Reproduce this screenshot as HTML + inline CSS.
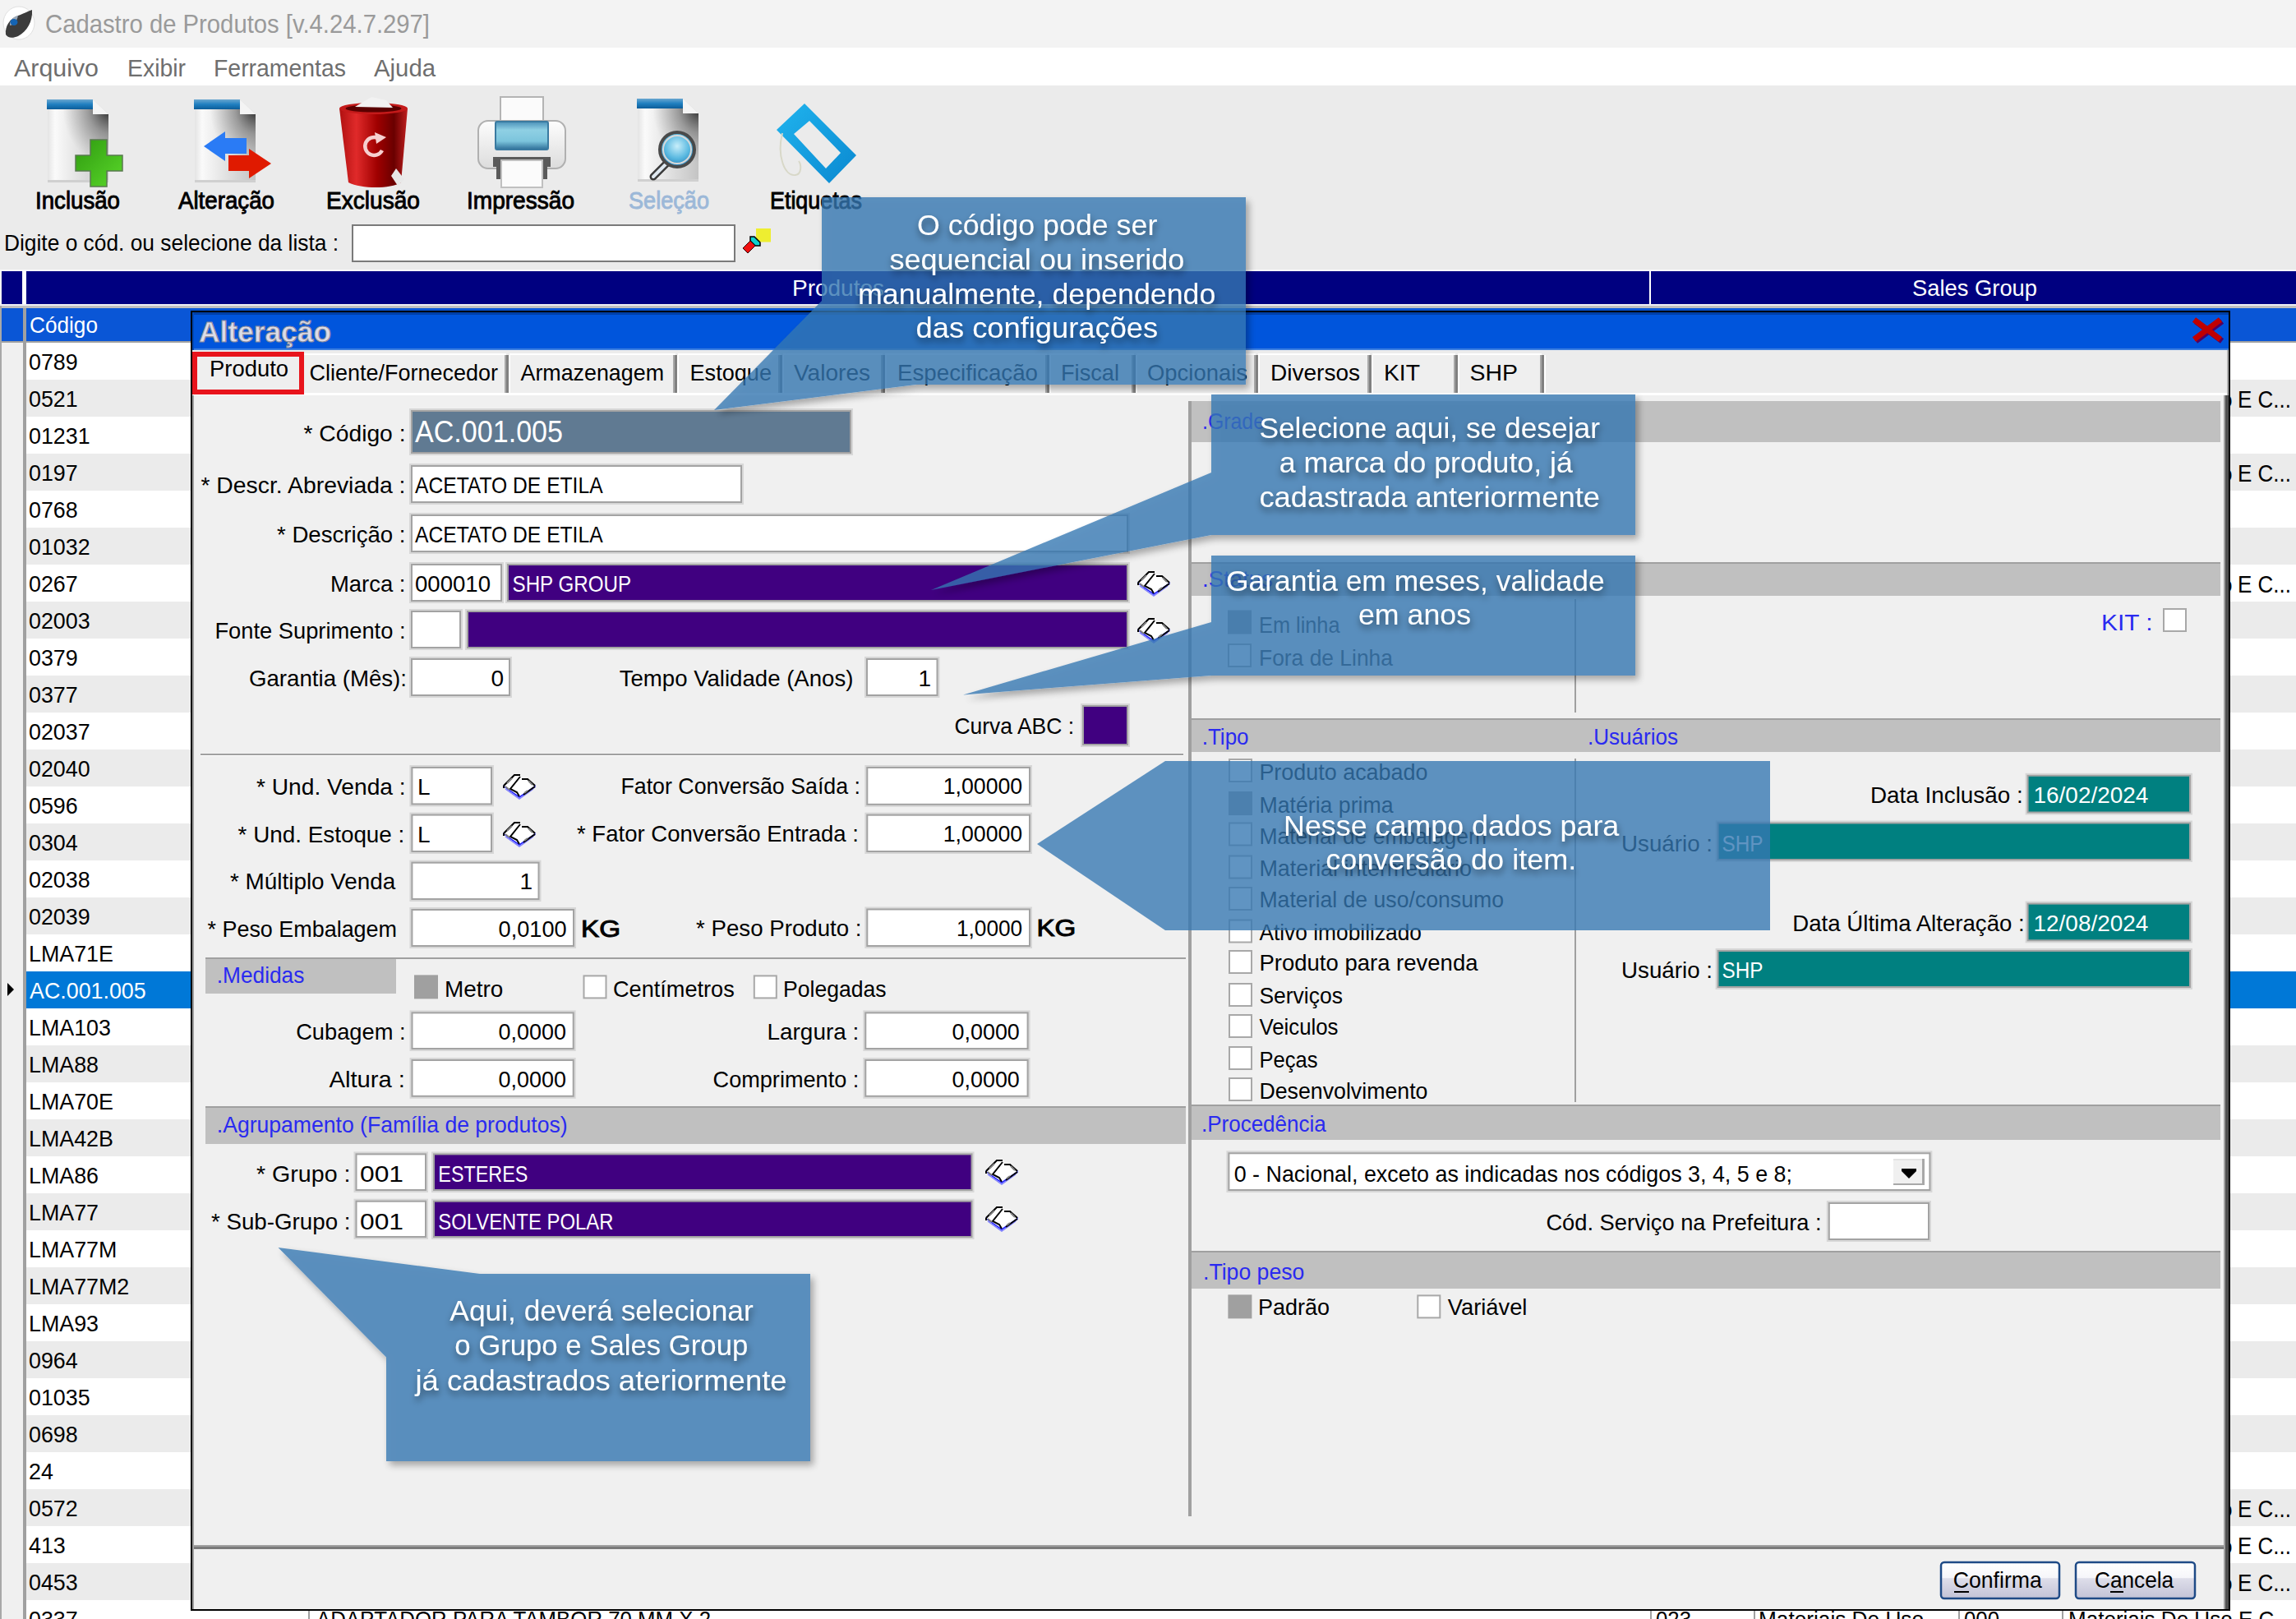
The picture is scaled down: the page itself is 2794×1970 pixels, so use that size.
<!DOCTYPE html>
<html><head><meta charset="utf-8"><title>Cadastro de Produtos</title>
<style>html,body{margin:0;padding:0;background:#f0f0f0;overflow:hidden}svg{display:block}</style></head>
<body><svg width="2794" height="1970" viewBox="0 0 2794 1970">
<defs>
<filter id="sh" x="-10%" y="-10%" width="130%" height="130%"><feFlood flood-color="#000" flood-opacity="1" result="f"/><feComposite in="f" in2="SourceAlpha" operator="in" result="sa"/><feGaussianBlur in="sa" stdDeviation="4"/><feOffset dx="4" dy="5" result="b"/><feComponentTransfer in="b" result="b2"><feFuncA type="linear" slope="0.4"/></feComponentTransfer><feComposite in="b2" in2="sa" operator="out" result="so"/><feMerge><feMergeNode in="so"/><feMergeNode in="SourceGraphic"/></feMerge></filter>
<filter id="tsh" x="-10%" y="-30%" width="130%" height="170%"><feGaussianBlur in="SourceAlpha" stdDeviation="4"/><feOffset dx="1" dy="5"/><feComponentTransfer><feFuncA type="linear" slope="0.5"/></feComponentTransfer><feMerge><feMergeNode/><feMergeNode in="SourceGraphic"/></feMerge></filter>

<linearGradient id="docg" x1="0" y1="0" x2="1" y2="0"><stop offset="0" stop-color="#e4e4e4"/><stop offset="0.12" stop-color="#fafafa"/><stop offset="0.6" stop-color="#dcdcdc"/><stop offset="1" stop-color="#c4c4c4"/></linearGradient>
<radialGradient id="docsh" cx="1" cy="0" r="0.75"><stop offset="0" stop-color="#202020" stop-opacity="0.95"/><stop offset="0.45" stop-color="#606060" stop-opacity="0.5"/><stop offset="1" stop-color="#808080" stop-opacity="0"/></radialGradient>
<linearGradient id="barg" x1="0" y1="0" x2="0" y2="1"><stop offset="0" stop-color="#6aa7d0"/><stop offset="0.5" stop-color="#1f7fc0"/><stop offset="1" stop-color="#0d5d99"/></linearGradient>
<linearGradient id="greeng" x1="0" y1="0" x2="1" y2="1"><stop offset="0" stop-color="#2f9a10"/><stop offset="1" stop-color="#5ad82a"/></linearGradient>
<linearGradient id="trashg" x1="0" y1="0" x2="1" y2="0"><stop offset="0" stop-color="#b01010"/><stop offset="0.25" stop-color="#e02a2a"/><stop offset="0.55" stop-color="#a00000"/><stop offset="0.8" stop-color="#6a0000"/><stop offset="1" stop-color="#c02020"/></linearGradient>
<linearGradient id="tagg" x1="0" y1="0" x2="1" y2="1"><stop offset="0" stop-color="#20b4ee"/><stop offset="1" stop-color="#0a88d0"/></linearGradient>
<radialGradient id="lensg" cx="0.5" cy="0.4" r="0.6"><stop offset="0" stop-color="#c8eefa"/><stop offset="0.6" stop-color="#58b8e0"/><stop offset="1" stop-color="#2a80b8"/></radialGradient>
<linearGradient id="printg" x1="0" y1="0" x2="0" y2="1"><stop offset="0" stop-color="#4a90b8"/><stop offset="0.3" stop-color="#8fd0e4"/><stop offset="0.7" stop-color="#7cc4dc"/><stop offset="1" stop-color="#2e6e98"/></linearGradient>
<linearGradient id="btng" x1="0" y1="0" x2="0" y2="1"><stop offset="0" stop-color="#ffffff"/><stop offset="0.42" stop-color="#f6f6fa"/><stop offset="0.45" stop-color="#dedeea"/><stop offset="1" stop-color="#c2c2d6"/></linearGradient>
<linearGradient id="pbody" x1="0" y1="0" x2="0" y2="1"><stop offset="0" stop-color="#fdfdfd"/><stop offset="1" stop-color="#dcdcdc"/></linearGradient>

</defs>
<rect x="0" y="0" width="2794" height="1970" fill="#f0f0f0" />
<rect x="0" y="0" width="2794" height="58" fill="#f3f3f3" />
<rect x="0" y="58" width="2794" height="46" fill="#ffffff" />
<rect x="0" y="104" width="2794" height="226" fill="#ebebeb" />
<rect x="0" y="330" width="2794" height="41" fill="#000080" />
<rect x="0" y="330" width="2" height="41" fill="#f4f4f4" />
<rect x="27" y="330" width="5" height="41" fill="#ffffff" />
<rect x="2007" y="330" width="2" height="41" fill="#ffffff" />
<rect x="0" y="370" width="2794" height="2" fill="#eeeef4" />
<rect x="0" y="372" width="2794" height="3" fill="#c0c0c0" />
<rect x="0" y="375" width="2794" height="40" fill="#0a56d6" />
<rect x="0" y="415" width="2794" height="2" fill="#a0a0a0" />
<rect x="28" y="375" width="4" height="42" fill="#a0a0a0" />
<rect x="0" y="372" width="2" height="45" fill="#a8a8a8" />
<rect x="0" y="417" width="28" height="1553" fill="#f0f0f0" />
<rect x="0" y="417" width="2" height="1553" fill="#a8a8a8" />
<rect x="28" y="417" width="4" height="1553" fill="#a0a0a0" />
<rect x="32" y="417" width="2762" height="45" fill="#ffffff" />
<text x="35" y="450" font-family="'Liberation Sans', sans-serif" font-size="28" fill="#000000" font-weight="normal" text-anchor="start" textLength="59.7" lengthAdjust="spacingAndGlyphs" >0789</text>
<rect x="32" y="462" width="2762" height="45" fill="#ebebeb" />
<text x="35" y="495" font-family="'Liberation Sans', sans-serif" font-size="28" fill="#000000" font-weight="normal" text-anchor="start" textLength="59.7" lengthAdjust="spacingAndGlyphs" >0521</text>
<text x="2701" y="496" font-family="'Liberation Sans', sans-serif" font-size="28" fill="#000000" font-weight="normal" text-anchor="start" >o</text>
<text x="2723" y="496" font-family="'Liberation Sans', sans-serif" font-size="30" fill="#000000" font-weight="normal" text-anchor="start" textLength="65" lengthAdjust="spacingAndGlyphs" >E C...</text>
<rect x="32" y="507" width="2762" height="45" fill="#ffffff" />
<text x="35" y="540" font-family="'Liberation Sans', sans-serif" font-size="28" fill="#000000" font-weight="normal" text-anchor="start" textLength="74.6" lengthAdjust="spacingAndGlyphs" >01231</text>
<rect x="32" y="552" width="2762" height="45" fill="#ebebeb" />
<text x="35" y="585" font-family="'Liberation Sans', sans-serif" font-size="28" fill="#000000" font-weight="normal" text-anchor="start" textLength="59.7" lengthAdjust="spacingAndGlyphs" >0197</text>
<text x="2701" y="586" font-family="'Liberation Sans', sans-serif" font-size="28" fill="#000000" font-weight="normal" text-anchor="start" >o</text>
<text x="2723" y="586" font-family="'Liberation Sans', sans-serif" font-size="30" fill="#000000" font-weight="normal" text-anchor="start" textLength="65" lengthAdjust="spacingAndGlyphs" >E C...</text>
<rect x="32" y="597" width="2762" height="45" fill="#ffffff" />
<text x="35" y="630" font-family="'Liberation Sans', sans-serif" font-size="28" fill="#000000" font-weight="normal" text-anchor="start" textLength="59.7" lengthAdjust="spacingAndGlyphs" >0768</text>
<rect x="32" y="642" width="2762" height="45" fill="#ebebeb" />
<text x="35" y="675" font-family="'Liberation Sans', sans-serif" font-size="28" fill="#000000" font-weight="normal" text-anchor="start" textLength="74.6" lengthAdjust="spacingAndGlyphs" >01032</text>
<rect x="32" y="687" width="2762" height="45" fill="#ffffff" />
<text x="35" y="720" font-family="'Liberation Sans', sans-serif" font-size="28" fill="#000000" font-weight="normal" text-anchor="start" textLength="59.7" lengthAdjust="spacingAndGlyphs" >0267</text>
<text x="2701" y="721" font-family="'Liberation Sans', sans-serif" font-size="28" fill="#000000" font-weight="normal" text-anchor="start" >o</text>
<text x="2723" y="721" font-family="'Liberation Sans', sans-serif" font-size="30" fill="#000000" font-weight="normal" text-anchor="start" textLength="65" lengthAdjust="spacingAndGlyphs" >E C...</text>
<rect x="32" y="732" width="2762" height="45" fill="#ebebeb" />
<text x="35" y="765" font-family="'Liberation Sans', sans-serif" font-size="28" fill="#000000" font-weight="normal" text-anchor="start" textLength="74.6" lengthAdjust="spacingAndGlyphs" >02003</text>
<rect x="32" y="777" width="2762" height="45" fill="#ffffff" />
<text x="35" y="810" font-family="'Liberation Sans', sans-serif" font-size="28" fill="#000000" font-weight="normal" text-anchor="start" textLength="59.7" lengthAdjust="spacingAndGlyphs" >0379</text>
<rect x="32" y="822" width="2762" height="45" fill="#ebebeb" />
<text x="35" y="855" font-family="'Liberation Sans', sans-serif" font-size="28" fill="#000000" font-weight="normal" text-anchor="start" textLength="59.7" lengthAdjust="spacingAndGlyphs" >0377</text>
<rect x="32" y="867" width="2762" height="45" fill="#ffffff" />
<text x="35" y="900" font-family="'Liberation Sans', sans-serif" font-size="28" fill="#000000" font-weight="normal" text-anchor="start" textLength="74.6" lengthAdjust="spacingAndGlyphs" >02037</text>
<rect x="32" y="912" width="2762" height="45" fill="#ebebeb" />
<text x="35" y="945" font-family="'Liberation Sans', sans-serif" font-size="28" fill="#000000" font-weight="normal" text-anchor="start" textLength="74.6" lengthAdjust="spacingAndGlyphs" >02040</text>
<rect x="32" y="957" width="2762" height="45" fill="#ffffff" />
<text x="35" y="990" font-family="'Liberation Sans', sans-serif" font-size="28" fill="#000000" font-weight="normal" text-anchor="start" textLength="59.7" lengthAdjust="spacingAndGlyphs" >0596</text>
<rect x="32" y="1002" width="2762" height="45" fill="#ebebeb" />
<text x="35" y="1035" font-family="'Liberation Sans', sans-serif" font-size="28" fill="#000000" font-weight="normal" text-anchor="start" textLength="59.7" lengthAdjust="spacingAndGlyphs" >0304</text>
<rect x="32" y="1047" width="2762" height="45" fill="#ffffff" />
<text x="35" y="1080" font-family="'Liberation Sans', sans-serif" font-size="28" fill="#000000" font-weight="normal" text-anchor="start" textLength="74.6" lengthAdjust="spacingAndGlyphs" >02038</text>
<rect x="32" y="1092" width="2762" height="45" fill="#ebebeb" />
<text x="35" y="1125" font-family="'Liberation Sans', sans-serif" font-size="28" fill="#000000" font-weight="normal" text-anchor="start" textLength="74.6" lengthAdjust="spacingAndGlyphs" >02039</text>
<rect x="32" y="1137" width="2762" height="45" fill="#ffffff" />
<text x="35" y="1170" font-family="'Liberation Sans', sans-serif" font-size="28" fill="#000000" font-weight="normal" text-anchor="start" textLength="102.9" lengthAdjust="spacingAndGlyphs" >LMA71E</text>
<rect x="32" y="1182" width="2762" height="45" fill="#0078d7" />
<path d="M9 1196 L17 1204 L9 1212 Z" fill="#000"/>
<text x="36" y="1215" font-family="'Liberation Sans', sans-serif" font-size="28" fill="#ffffff" font-weight="normal" text-anchor="start" textLength="141.7" lengthAdjust="spacingAndGlyphs" >AC.001.005</text>
<rect x="32" y="1227" width="2762" height="45" fill="#ffffff" />
<text x="35" y="1260" font-family="'Liberation Sans', sans-serif" font-size="28" fill="#000000" font-weight="normal" text-anchor="start" textLength="99.9" lengthAdjust="spacingAndGlyphs" >LMA103</text>
<rect x="32" y="1272" width="2762" height="45" fill="#ebebeb" />
<text x="35" y="1305" font-family="'Liberation Sans', sans-serif" font-size="28" fill="#000000" font-weight="normal" text-anchor="start" textLength="85.0" lengthAdjust="spacingAndGlyphs" >LMA88</text>
<rect x="32" y="1317" width="2762" height="45" fill="#ffffff" />
<text x="35" y="1350" font-family="'Liberation Sans', sans-serif" font-size="28" fill="#000000" font-weight="normal" text-anchor="start" textLength="102.9" lengthAdjust="spacingAndGlyphs" >LMA70E</text>
<rect x="32" y="1362" width="2762" height="45" fill="#ebebeb" />
<text x="35" y="1395" font-family="'Liberation Sans', sans-serif" font-size="28" fill="#000000" font-weight="normal" text-anchor="start" textLength="102.9" lengthAdjust="spacingAndGlyphs" >LMA42B</text>
<rect x="32" y="1407" width="2762" height="45" fill="#ffffff" />
<text x="35" y="1440" font-family="'Liberation Sans', sans-serif" font-size="28" fill="#000000" font-weight="normal" text-anchor="start" textLength="85.0" lengthAdjust="spacingAndGlyphs" >LMA86</text>
<rect x="32" y="1452" width="2762" height="45" fill="#ebebeb" />
<text x="35" y="1485" font-family="'Liberation Sans', sans-serif" font-size="28" fill="#000000" font-weight="normal" text-anchor="start" textLength="85.0" lengthAdjust="spacingAndGlyphs" >LMA77</text>
<rect x="32" y="1497" width="2762" height="45" fill="#ffffff" />
<text x="35" y="1530" font-family="'Liberation Sans', sans-serif" font-size="28" fill="#000000" font-weight="normal" text-anchor="start" textLength="107.3" lengthAdjust="spacingAndGlyphs" >LMA77M</text>
<rect x="32" y="1542" width="2762" height="45" fill="#ebebeb" />
<text x="35" y="1575" font-family="'Liberation Sans', sans-serif" font-size="28" fill="#000000" font-weight="normal" text-anchor="start" textLength="122.3" lengthAdjust="spacingAndGlyphs" >LMA77M2</text>
<rect x="32" y="1587" width="2762" height="45" fill="#ffffff" />
<text x="35" y="1620" font-family="'Liberation Sans', sans-serif" font-size="28" fill="#000000" font-weight="normal" text-anchor="start" textLength="85.0" lengthAdjust="spacingAndGlyphs" >LMA93</text>
<rect x="32" y="1632" width="2762" height="45" fill="#ebebeb" />
<text x="35" y="1665" font-family="'Liberation Sans', sans-serif" font-size="28" fill="#000000" font-weight="normal" text-anchor="start" textLength="59.7" lengthAdjust="spacingAndGlyphs" >0964</text>
<rect x="32" y="1677" width="2762" height="45" fill="#ffffff" />
<text x="35" y="1710" font-family="'Liberation Sans', sans-serif" font-size="28" fill="#000000" font-weight="normal" text-anchor="start" textLength="74.6" lengthAdjust="spacingAndGlyphs" >01035</text>
<rect x="32" y="1722" width="2762" height="45" fill="#ebebeb" />
<text x="35" y="1755" font-family="'Liberation Sans', sans-serif" font-size="28" fill="#000000" font-weight="normal" text-anchor="start" textLength="59.7" lengthAdjust="spacingAndGlyphs" >0698</text>
<rect x="32" y="1767" width="2762" height="45" fill="#ffffff" />
<text x="35" y="1800" font-family="'Liberation Sans', sans-serif" font-size="28" fill="#000000" font-weight="normal" text-anchor="start" textLength="29.8" lengthAdjust="spacingAndGlyphs" >24</text>
<rect x="32" y="1812" width="2762" height="45" fill="#ebebeb" />
<text x="35" y="1845" font-family="'Liberation Sans', sans-serif" font-size="28" fill="#000000" font-weight="normal" text-anchor="start" textLength="59.7" lengthAdjust="spacingAndGlyphs" >0572</text>
<text x="2701" y="1846" font-family="'Liberation Sans', sans-serif" font-size="28" fill="#000000" font-weight="normal" text-anchor="start" >o</text>
<text x="2723" y="1846" font-family="'Liberation Sans', sans-serif" font-size="30" fill="#000000" font-weight="normal" text-anchor="start" textLength="65" lengthAdjust="spacingAndGlyphs" >E C...</text>
<rect x="32" y="1857" width="2762" height="45" fill="#ffffff" />
<text x="35" y="1890" font-family="'Liberation Sans', sans-serif" font-size="28" fill="#000000" font-weight="normal" text-anchor="start" textLength="44.8" lengthAdjust="spacingAndGlyphs" >413</text>
<text x="2701" y="1891" font-family="'Liberation Sans', sans-serif" font-size="28" fill="#000000" font-weight="normal" text-anchor="start" >o</text>
<text x="2723" y="1891" font-family="'Liberation Sans', sans-serif" font-size="30" fill="#000000" font-weight="normal" text-anchor="start" textLength="65" lengthAdjust="spacingAndGlyphs" >E C...</text>
<rect x="32" y="1902" width="2762" height="45" fill="#ebebeb" />
<text x="35" y="1935" font-family="'Liberation Sans', sans-serif" font-size="28" fill="#000000" font-weight="normal" text-anchor="start" textLength="59.7" lengthAdjust="spacingAndGlyphs" >0453</text>
<text x="2701" y="1936" font-family="'Liberation Sans', sans-serif" font-size="28" fill="#000000" font-weight="normal" text-anchor="start" >o</text>
<text x="2723" y="1936" font-family="'Liberation Sans', sans-serif" font-size="30" fill="#000000" font-weight="normal" text-anchor="start" textLength="65" lengthAdjust="spacingAndGlyphs" >E C...</text>
<rect x="32" y="1947" width="2762" height="45" fill="#ffffff" />
<text x="35" y="1980" font-family="'Liberation Sans', sans-serif" font-size="28" fill="#000000" font-weight="normal" text-anchor="start" textLength="59.7" lengthAdjust="spacingAndGlyphs" >0337</text>
<rect x="375" y="1959" width="2" height="30" fill="#a0a0a0" />
<rect x="2008" y="1959" width="2" height="30" fill="#a0a0a0" />
<rect x="2134" y="1959" width="2" height="30" fill="#a0a0a0" />
<rect x="2383" y="1959" width="2" height="30" fill="#a0a0a0" />
<rect x="2509" y="1959" width="2" height="30" fill="#a0a0a0" />
<text x="385" y="1980" font-family="'Liberation Sans', sans-serif" font-size="28" fill="#000" font-weight="normal" text-anchor="start" textLength="480" lengthAdjust="spacingAndGlyphs" >ADAPTADOR PARA TAMBOR 70 MM X 2</text>
<text x="2015" y="1980" font-family="'Liberation Sans', sans-serif" font-size="28" fill="#000" font-weight="normal" text-anchor="start" textLength="43" lengthAdjust="spacingAndGlyphs" >023</text>
<text x="2140" y="1980" font-family="'Liberation Sans', sans-serif" font-size="28" fill="#000" font-weight="normal" text-anchor="start" textLength="201" lengthAdjust="spacingAndGlyphs" >Materiais De Uso</text>
<text x="2390" y="1980" font-family="'Liberation Sans', sans-serif" font-size="28" fill="#000" font-weight="normal" text-anchor="start" textLength="43" lengthAdjust="spacingAndGlyphs" >000</text>
<text x="2517" y="1980" font-family="'Liberation Sans', sans-serif" font-size="28" fill="#000" font-weight="normal" text-anchor="start" textLength="272" lengthAdjust="spacingAndGlyphs" >Materiais De Uso E C...</text>
<ellipse cx="23" cy="28" rx="19" ry="20" fill="#ffffff" stroke="#e0e0e0" stroke-width="1"/>
<path d="M7 42 C 6 32, 12 22, 22 19 C 30 16, 36 13, 39 12 C 40 26, 33 38, 22 44 C 15 47, 9 46, 7 42 Z" fill="#3c3c3c"/>
<path d="M12 28 C 14 22, 18 20, 22 19 C 21 24, 18 30, 12 31 Z" fill="#9aa8b8"/>
<ellipse cx="17" cy="27" rx="4.5" ry="4" fill="#1464b4"/>
<text x="55" y="40" font-family="'Liberation Sans', sans-serif" font-size="32" fill="#9a9a9a" font-weight="normal" text-anchor="start" textLength="468" lengthAdjust="spacingAndGlyphs" >Cadastro de Produtos [v.4.24.7.297]</text>
<text x="17" y="93" font-family="'Liberation Sans', sans-serif" font-size="30" fill="#6e6e6e" font-weight="normal" text-anchor="start" textLength="103" lengthAdjust="spacingAndGlyphs" >Arquivo</text>
<text x="155" y="93" font-family="'Liberation Sans', sans-serif" font-size="30" fill="#6e6e6e" font-weight="normal" text-anchor="start" textLength="71" lengthAdjust="spacingAndGlyphs" >Exibir</text>
<text x="260" y="93" font-family="'Liberation Sans', sans-serif" font-size="30" fill="#6e6e6e" font-weight="normal" text-anchor="start" textLength="161" lengthAdjust="spacingAndGlyphs" >Ferramentas</text>
<text x="455" y="93" font-family="'Liberation Sans', sans-serif" font-size="30" fill="#6e6e6e" font-weight="normal" text-anchor="start" textLength="75" lengthAdjust="spacingAndGlyphs" >Ajuda</text>
<g transform="translate(57,121)"><path d="M1 12 L1 100 L75 100 L75 18 L56 0 L56 12 Z" fill="url(#docg)"/><rect x="0" y="0" width="56" height="12" fill="url(#barg)"/><path d="M1 12 L56 12 L56 18 L75 18 L75 100 L1 100 Z" fill="url(#docsh)"/><path d="M56 0 L75 18 L56 18 Z" fill="#f4f4f4"/><rect x="1" y="98" width="74" height="3" fill="#d0d0d0"/></g>
<path d="M110 170 H130 V189 H149 V208 H130 V227 H110 V208 H92 V189 H110 Z" fill="url(#greeng)" stroke="#5a7a50" stroke-width="1.5"/>
<g transform="translate(236,121)"><path d="M1 12 L1 100 L75 100 L75 18 L56 0 L56 12 Z" fill="url(#docg)"/><rect x="0" y="0" width="56" height="12" fill="url(#barg)"/><path d="M1 12 L56 12 L56 18 L75 18 L75 100 L1 100 Z" fill="url(#docsh)"/><path d="M56 0 L75 18 L56 18 Z" fill="#f4f4f4"/><rect x="1" y="98" width="74" height="3" fill="#d0d0d0"/></g>
<path d="M248 178 L274 160 L274 168 L300 168 L300 187 L274 187 L274 196 Z" fill="#2a7bf5"/>
<path d="M330 199 L303 181 L303 189 L278 189 L278 208 L303 208 L303 217 Z" fill="#e01a00"/>
<path d="M413 132 L424 222 C 440 230, 475 230, 488 222 L496 132 Z" fill="url(#trashg)"/>
<ellipse cx="454.5" cy="132" rx="41.5" ry="7" fill="#c41a1a"/>
<ellipse cx="454.5" cy="132" rx="34" ry="4.5" fill="#5a0000"/>
<path d="M432 130 L452 118 L470 122 L478 131 Z" fill="#f2f2f2"/>
<path d="M460 168 A 11 11 0 1 0 465 183" fill="none" stroke="#f6d0d0" stroke-width="4.5"/>
<path d="M456 161 L470 167 L458 175 Z" fill="#f6d0d0"/>
<path d="M482 205 L492 218 L484 226 L476 214 Z" fill="#e8e8e8"/>
<rect x="609" y="118" width="52" height="32" fill="#fbfbfb" stroke="#b4b4b4" stroke-width="2"/>
<rect x="582" y="147" width="106" height="58" rx="12" fill="url(#pbody)" stroke="#b0b0b0" stroke-width="2"/>
<rect x="603" y="148" width="64" height="34" rx="2" fill="url(#printg)" stroke="#3a7aa0" stroke-width="2"/>
<rect x="600" y="191" width="70" height="12" fill="#5a5a5a"/>
<rect x="604" y="197" width="8" height="21" fill="#5a5a5a"/><rect x="658" y="197" width="8" height="21" fill="#5a5a5a"/>
<rect x="610" y="195" width="50" height="33" fill="#fbfbfb" stroke="#c0c0c0" stroke-width="2"/>
<g transform="translate(775,120)"><path d="M1 12 L1 100 L75 100 L75 18 L56 0 L56 12 Z" fill="url(#docg)"/><rect x="0" y="0" width="56" height="12" fill="url(#barg)"/><path d="M1 12 L56 12 L56 18 L75 18 L75 100 L1 100 Z" fill="url(#docsh)"/><path d="M56 0 L75 18 L56 18 Z" fill="#f4f4f4"/><rect x="1" y="98" width="74" height="3" fill="#d0d0d0"/></g>
<line x1="795" y1="215" x2="812" y2="198" stroke="#3a3a3a" stroke-width="9" stroke-linecap="round"/>
<line x1="795" y1="215" x2="812" y2="198" stroke="#dfe8f0" stroke-width="4" stroke-linecap="round"/>
<circle cx="824" cy="182" r="21" fill="url(#lensg)" stroke="#4a4a4a" stroke-width="4"/>
<circle cx="824" cy="182" r="17" fill="none" stroke="#d8d8d8" stroke-width="2"/>
<path d="M945 158 L979 126 L1042 189 L1009 223 Z M966 163 L1005 205 L1023 186 L985 147 Z" fill="url(#tagg)" fill-rule="evenodd"/>
<path d="M952 162 C 945 190, 955 215, 968 213 C 976 212, 975 200, 972 196" fill="none" stroke="#d8d8c8" stroke-width="2"/>
<text x="43" y="254" font-family="'Liberation Sans', sans-serif" font-size="29" fill="#000" font-weight="normal" text-anchor="start" textLength="103" lengthAdjust="spacingAndGlyphs" stroke="#000" stroke-width="0.9">Inclusão</text>
<text x="217" y="254" font-family="'Liberation Sans', sans-serif" font-size="29" fill="#000" font-weight="normal" text-anchor="start" textLength="117" lengthAdjust="spacingAndGlyphs" stroke="#000" stroke-width="0.9">Alteração</text>
<text x="397" y="254" font-family="'Liberation Sans', sans-serif" font-size="29" fill="#000" font-weight="normal" text-anchor="start" textLength="114" lengthAdjust="spacingAndGlyphs" stroke="#000" stroke-width="0.9">Exclusão</text>
<text x="568" y="254" font-family="'Liberation Sans', sans-serif" font-size="29" fill="#000" font-weight="normal" text-anchor="start" textLength="131" lengthAdjust="spacingAndGlyphs" stroke="#000" stroke-width="0.9">Impressão</text>
<text x="765" y="254" font-family="'Liberation Sans', sans-serif" font-size="29" fill="#9cb8d8" font-weight="normal" text-anchor="start" textLength="98" lengthAdjust="spacingAndGlyphs" stroke="#9cb8d8" stroke-width="0.9">Seleção</text>
<text x="937" y="254" font-family="'Liberation Sans', sans-serif" font-size="29" fill="#000" font-weight="normal" text-anchor="start" textLength="112" lengthAdjust="spacingAndGlyphs" stroke="#000" stroke-width="0.9">Etiquetas</text>
<text x="5" y="305" font-family="'Liberation Sans', sans-serif" font-size="28" fill="#000" font-weight="normal" text-anchor="start" textLength="407" lengthAdjust="spacingAndGlyphs" >Digite o cód. ou selecione da lista :</text>
<rect x="428" y="273" width="467" height="46" fill="#7a7a7a" />
<rect x="430" y="275" width="463" height="42" fill="#ffffff" />
<rect x="920" y="278" width="18" height="16.5" fill="#eeee30"/>
<path d="M913 288 L918 288 L925 295 L925 299 L919 299 L913 293 Z" fill="#10d0d0" stroke="#000" stroke-width="1.5"/>
<path d="M904 302 L913 293 L919 299 L910 308 Z" fill="#f01010" stroke="#300000" stroke-width="1"/>
<rect x="0" y="328" width="2794" height="2" fill="#fafafa" />
<text x="1020" y="360" font-family="'Liberation Sans', sans-serif" font-size="28" fill="#ffffff" font-weight="normal" text-anchor="middle" >Produtos</text>
<text x="2327" y="360" font-family="'Liberation Sans', sans-serif" font-size="28" fill="#ffffff" font-weight="normal" text-anchor="start" textLength="152" lengthAdjust="spacingAndGlyphs" >Sales Group</text>
<text x="36" y="405" font-family="'Liberation Sans', sans-serif" font-size="28" fill="#ffffff" font-weight="normal" text-anchor="start" textLength="83" lengthAdjust="spacingAndGlyphs" >Código</text>
<rect x="232" y="378" width="2482" height="1582" fill="#000000" />
<rect x="234" y="380" width="2478" height="1578" fill="#f0f0f0" />
<rect x="234" y="380" width="2478" height="46" fill="#0055dc" />
<rect x="234" y="380" width="2478" height="3" fill="#003fa8" />
<rect x="234" y="424" width="2478" height="2" fill="#3c7ee0" />
<text x="242" y="415.5" font-family="'Liberation Sans', sans-serif" font-size="35" fill="#dcdce8" font-weight="bold" text-anchor="start" textLength="161" lengthAdjust="spacingAndGlyphs" stroke="#8c8c9c" stroke-width="1.1">Alteração</text>
<path d="M2670 389 L2702 413 M2702 389 L2670 413" stroke="#500060" stroke-width="7" transform="translate(2,2)"/>
<path d="M2670 389 L2702 413 M2702 389 L2670 413" stroke="#c00000" stroke-width="7"/>
<rect x="234" y="426" width="2478" height="55" fill="#ececec" />
<rect x="234" y="478" width="2478" height="3" fill="#ffffff" />
<rect x="237" y="430" width="131" height="2" fill="#ffffff" />
<rect x="237" y="432" width="131" height="46" fill="#efefef" />
<rect x="369" y="430" width="247" height="2" fill="#ffffff" />
<rect x="369" y="432" width="247" height="46" fill="#efefef" />
<rect x="620" y="430" width="202" height="2" fill="#ffffff" />
<rect x="620" y="432" width="202" height="46" fill="#efefef" />
<rect x="825" y="430" width="125" height="2" fill="#ffffff" />
<rect x="825" y="432" width="125" height="46" fill="#efefef" />
<rect x="953" y="430" width="121" height="2" fill="#ffffff" />
<rect x="953" y="432" width="121" height="46" fill="#efefef" />
<rect x="1077" y="430" width="197" height="2" fill="#ffffff" />
<rect x="1077" y="432" width="197" height="46" fill="#efefef" />
<rect x="1277" y="430" width="103" height="2" fill="#ffffff" />
<rect x="1277" y="432" width="103" height="46" fill="#efefef" />
<rect x="1383" y="430" width="145" height="2" fill="#ffffff" />
<rect x="1383" y="432" width="145" height="46" fill="#efefef" />
<rect x="1531" y="430" width="136" height="2" fill="#ffffff" />
<rect x="1531" y="432" width="136" height="46" fill="#efefef" />
<rect x="1670" y="430" width="101" height="2" fill="#ffffff" />
<rect x="1670" y="432" width="101" height="46" fill="#efefef" />
<rect x="1774" y="430" width="102" height="2" fill="#ffffff" />
<rect x="1774" y="432" width="102" height="46" fill="#efefef" />
<rect x="614" y="432" width="2" height="46" fill="#a8a8a8" />
<rect x="616" y="432" width="3" height="46" fill="#808080" />
<rect x="619" y="432" width="2" height="46" fill="#ffffff" />
<rect x="819" y="432" width="2" height="46" fill="#a8a8a8" />
<rect x="821" y="432" width="3" height="46" fill="#808080" />
<rect x="824" y="432" width="2" height="46" fill="#ffffff" />
<rect x="947" y="432" width="2" height="46" fill="#a8a8a8" />
<rect x="949" y="432" width="3" height="46" fill="#808080" />
<rect x="952" y="432" width="2" height="46" fill="#ffffff" />
<rect x="1072" y="432" width="2" height="46" fill="#a8a8a8" />
<rect x="1074" y="432" width="3" height="46" fill="#808080" />
<rect x="1077" y="432" width="2" height="46" fill="#ffffff" />
<rect x="1272" y="432" width="2" height="46" fill="#a8a8a8" />
<rect x="1274" y="432" width="3" height="46" fill="#808080" />
<rect x="1277" y="432" width="2" height="46" fill="#ffffff" />
<rect x="1377" y="432" width="2" height="46" fill="#a8a8a8" />
<rect x="1379" y="432" width="3" height="46" fill="#808080" />
<rect x="1382" y="432" width="2" height="46" fill="#ffffff" />
<rect x="1526" y="432" width="2" height="46" fill="#a8a8a8" />
<rect x="1528" y="432" width="3" height="46" fill="#808080" />
<rect x="1531" y="432" width="2" height="46" fill="#ffffff" />
<rect x="1664" y="432" width="2" height="46" fill="#a8a8a8" />
<rect x="1666" y="432" width="3" height="46" fill="#808080" />
<rect x="1669" y="432" width="2" height="46" fill="#ffffff" />
<rect x="1769" y="432" width="2" height="46" fill="#a8a8a8" />
<rect x="1771" y="432" width="3" height="46" fill="#808080" />
<rect x="1774" y="432" width="2" height="46" fill="#ffffff" />
<rect x="1874" y="432" width="2" height="46" fill="#a8a8a8" />
<rect x="1876" y="432" width="3" height="46" fill="#808080" />
<rect x="1879" y="432" width="2" height="46" fill="#ffffff" />
<rect x="234" y="428" width="136" height="52" fill="#e8141c" />
<rect x="240" y="434" width="124" height="40" fill="#efefef" />
<text x="255" y="458" font-family="'Liberation Sans', sans-serif" font-size="28" fill="#000" font-weight="normal" text-anchor="start" textLength="96" lengthAdjust="spacingAndGlyphs" >Produto</text>
<text x="376.6" y="462.5" font-family="'Liberation Sans', sans-serif" font-size="28" fill="#000" font-weight="normal" text-anchor="start" textLength="229.4" lengthAdjust="spacingAndGlyphs" >Cliente/Fornecedor</text>
<text x="633.5" y="462.5" font-family="'Liberation Sans', sans-serif" font-size="28" fill="#000" font-weight="normal" text-anchor="start" textLength="174.5" lengthAdjust="spacingAndGlyphs" >Armazenagem</text>
<text x="839.5" y="462.5" font-family="'Liberation Sans', sans-serif" font-size="28" fill="#000" font-weight="normal" text-anchor="start" textLength="99.5" lengthAdjust="spacingAndGlyphs" >Estoque</text>
<text x="966" y="462.5" font-family="'Liberation Sans', sans-serif" font-size="28" fill="#000" font-weight="normal" text-anchor="start" textLength="93" lengthAdjust="spacingAndGlyphs" >Valores</text>
<text x="1092" y="462.5" font-family="'Liberation Sans', sans-serif" font-size="28" fill="#000" font-weight="normal" text-anchor="start" textLength="171" lengthAdjust="spacingAndGlyphs" >Especificação</text>
<text x="1291" y="462.5" font-family="'Liberation Sans', sans-serif" font-size="28" fill="#000" font-weight="normal" text-anchor="start" textLength="71" lengthAdjust="spacingAndGlyphs" >Fiscal</text>
<text x="1396" y="462.5" font-family="'Liberation Sans', sans-serif" font-size="28" fill="#000" font-weight="normal" text-anchor="start" textLength="122" lengthAdjust="spacingAndGlyphs" >Opcionais</text>
<text x="1546" y="462.5" font-family="'Liberation Sans', sans-serif" font-size="28" fill="#000" font-weight="normal" text-anchor="start" textLength="109" lengthAdjust="spacingAndGlyphs" >Diversos</text>
<text x="1684" y="462.5" font-family="'Liberation Sans', sans-serif" font-size="28" fill="#000" font-weight="normal" text-anchor="start" textLength="44" lengthAdjust="spacingAndGlyphs" >KIT</text>
<text x="1788.5" y="462.5" font-family="'Liberation Sans', sans-serif" font-size="28" fill="#000" font-weight="normal" text-anchor="start" textLength="58.5" lengthAdjust="spacingAndGlyphs" >SHP</text>
<rect x="236" y="1880" width="2472" height="2" fill="#a0a0a0" />
<rect x="236" y="1882" width="2472" height="3" fill="#7a7a7a" />
<rect x="234" y="380" width="2" height="46" fill="#0048b8" />
<rect x="234" y="481" width="2" height="1477" fill="#a0a0a0" />
<rect x="2710" y="426" width="2" height="55" fill="#b0b0b0" />
<rect x="2706" y="481" width="2" height="1477" fill="#a0a0a0" />
<rect x="2708" y="481" width="4" height="1477" fill="#505050" />
<text x="369.5" y="537" font-family="'Liberation Sans', sans-serif" font-size="28" fill="#000" font-weight="normal" text-anchor="start" textLength="124.0" lengthAdjust="spacingAndGlyphs" >* Código :</text>
<rect x="498" y="497" width="540" height="57" fill="#d7d7d7" />
<rect x="500" y="499" width="536" height="53" fill="#a3a3a3" />
<rect x="502" y="501" width="532" height="49" fill="#607a92" />
<text x="505" y="538" font-family="'Liberation Sans', sans-serif" font-size="36" fill="#ffffff" font-weight="normal" text-anchor="start" textLength="180" lengthAdjust="spacingAndGlyphs" >AC.001.005</text>
<text x="244.4" y="600" font-family="'Liberation Sans', sans-serif" font-size="28" fill="#000" font-weight="normal" text-anchor="start" textLength="249.1" lengthAdjust="spacingAndGlyphs" >* Descr. Abreviada :</text>
<rect x="498" y="564" width="407" height="50" fill="#d7d7d7" />
<rect x="500" y="566" width="403" height="46" fill="#a3a3a3" />
<rect x="502" y="568" width="399" height="42" fill="#fff" />
<text x="505" y="600" font-family="'Liberation Sans', sans-serif" font-size="28" fill="#000" font-weight="normal" text-anchor="start" textLength="228.6" lengthAdjust="spacingAndGlyphs" >ACETATO DE ETILA</text>
<text x="337" y="660" font-family="'Liberation Sans', sans-serif" font-size="28" fill="#000" font-weight="normal" text-anchor="start" textLength="156.5" lengthAdjust="spacingAndGlyphs" >* Descrição :</text>
<rect x="498" y="624" width="877" height="50" fill="#d7d7d7" />
<rect x="500" y="626" width="873" height="46" fill="#a3a3a3" />
<rect x="502" y="628" width="869" height="42" fill="#fff" />
<text x="505" y="660" font-family="'Liberation Sans', sans-serif" font-size="28" fill="#000" font-weight="normal" text-anchor="start" textLength="228.6" lengthAdjust="spacingAndGlyphs" >ACETATO DE ETILA</text>
<text x="402" y="720" font-family="'Liberation Sans', sans-serif" font-size="28" fill="#000" font-weight="normal" text-anchor="start" textLength="91.5" lengthAdjust="spacingAndGlyphs" >Marca :</text>
<rect x="498" y="684" width="115" height="50" fill="#d7d7d7" />
<rect x="500" y="686" width="111" height="46" fill="#a3a3a3" />
<rect x="502" y="688" width="107" height="42" fill="#fff" />
<text x="505" y="720" font-family="'Liberation Sans', sans-serif" font-size="28" fill="#000" font-weight="normal" text-anchor="start" textLength="92" lengthAdjust="spacingAndGlyphs" >000010</text>
<rect x="615" y="684" width="760" height="50" fill="#d7d7d7" />
<rect x="617" y="686" width="756" height="46" fill="#a3a3a3" />
<rect x="619" y="688" width="752" height="42" fill="#400080" />
<text x="623.6" y="720" font-family="'Liberation Sans', sans-serif" font-size="28" fill="#ffffff" font-weight="normal" text-anchor="start" textLength="144.4" lengthAdjust="spacingAndGlyphs" >SHP GROUP</text>
<g transform="translate(1384,694)"><path d="M0.5 16 L10 23 L20 30 L39.5 17 L39.5 14 L20 27 L0.5 14 Z" fill="#2020ff"/><path d="M3 19 L20 31 L37 19" fill="none" stroke="#8080ff" stroke-width="1.5"/><path d="M1 15 L14 2 L21 2 L23 6 L30 6 L39 15 L20 28 Z" fill="#ffffff"/><path d="M1 15 L14 2 L21 2 M23 7 L30 7 L39 15" fill="none" stroke="#000" stroke-width="2.2"/><path d="M21 4 L9 19 L17 23 L20 28" fill="none" stroke="#000" stroke-width="2"/><path d="M39 16 L25 26" fill="none" stroke="#000" stroke-width="2"/><path d="M3 16 L8 20 M26 24 L30 21 M5 12 L11 6 M31 9 L36 14" stroke="#808080" stroke-width="2"/><path d="M1 15 L1 18" stroke="#000" stroke-width="2"/></g>
<text x="261.4" y="777" font-family="'Liberation Sans', sans-serif" font-size="28" fill="#000" font-weight="normal" text-anchor="start" textLength="232.1" lengthAdjust="spacingAndGlyphs" >Fonte Suprimento :</text>
<rect x="498" y="741" width="65" height="50" fill="#d7d7d7" />
<rect x="500" y="743" width="61" height="46" fill="#a3a3a3" />
<rect x="502" y="745" width="57" height="42" fill="#fff" />
<rect x="566" y="741" width="809" height="50" fill="#d7d7d7" />
<rect x="568" y="743" width="805" height="46" fill="#a3a3a3" />
<rect x="570" y="745" width="801" height="42" fill="#400080" />
<g transform="translate(1384,751)"><path d="M0.5 16 L10 23 L20 30 L39.5 17 L39.5 14 L20 27 L0.5 14 Z" fill="#2020ff"/><path d="M3 19 L20 31 L37 19" fill="none" stroke="#8080ff" stroke-width="1.5"/><path d="M1 15 L14 2 L21 2 L23 6 L30 6 L39 15 L20 28 Z" fill="#ffffff"/><path d="M1 15 L14 2 L21 2 M23 7 L30 7 L39 15" fill="none" stroke="#000" stroke-width="2.2"/><path d="M21 4 L9 19 L17 23 L20 28" fill="none" stroke="#000" stroke-width="2"/><path d="M39 16 L25 26" fill="none" stroke="#000" stroke-width="2"/><path d="M3 16 L8 20 M26 24 L30 21 M5 12 L11 6 M31 9 L36 14" stroke="#808080" stroke-width="2"/><path d="M1 15 L1 18" stroke="#000" stroke-width="2"/></g>
<text x="303" y="834.5" font-family="'Liberation Sans', sans-serif" font-size="28" fill="#000" font-weight="normal" text-anchor="start" textLength="192" lengthAdjust="spacingAndGlyphs" >Garantia (Mês):</text>
<rect x="498" y="799" width="125" height="50" fill="#d7d7d7" />
<rect x="500" y="801" width="121" height="46" fill="#a3a3a3" />
<rect x="502" y="803" width="117" height="42" fill="#fff" />
<text x="613" y="834.5" font-family="'Liberation Sans', sans-serif" font-size="28" fill="#000" font-weight="normal" text-anchor="end" >0</text>
<text x="753.7" y="835.4" font-family="'Liberation Sans', sans-serif" font-size="28" fill="#000" font-weight="normal" text-anchor="start" textLength="284.7" lengthAdjust="spacingAndGlyphs" >Tempo Validade (Anos)</text>
<rect x="1052" y="799" width="91.5" height="50" fill="#d7d7d7" />
<rect x="1054" y="801" width="87.5" height="46" fill="#a3a3a3" />
<rect x="1056" y="803" width="83.5" height="42" fill="#fff" />
<text x="1133" y="835" font-family="'Liberation Sans', sans-serif" font-size="28" fill="#000" font-weight="normal" text-anchor="end" >1</text>
<text x="1161.5" y="892.5" font-family="'Liberation Sans', sans-serif" font-size="28" fill="#000" font-weight="normal" text-anchor="start" textLength="145.5" lengthAdjust="spacingAndGlyphs" >Curva ABC :</text>
<rect x="1315" y="856" width="60" height="53" fill="#d7d7d7" />
<rect x="1317" y="858" width="56" height="49" fill="#a3a3a3" />
<rect x="1319" y="860" width="52" height="45" fill="#400080" />
<rect x="244" y="917" width="1196" height="2" fill="#a0a0a0" />
<rect x="244" y="919" width="1196" height="1" fill="#ffffff" />
<text x="312" y="967" font-family="'Liberation Sans', sans-serif" font-size="28" fill="#000" font-weight="normal" text-anchor="start" textLength="181.6" lengthAdjust="spacingAndGlyphs" >* Und. Venda :</text>
<rect x="498.4" y="931" width="102.60000000000002" height="50.39999999999998" fill="#d7d7d7" />
<rect x="500.4" y="933" width="98.60000000000002" height="46.39999999999998" fill="#a3a3a3" />
<rect x="502.4" y="935" width="94.60000000000002" height="42.39999999999998" fill="#fff" />
<text x="508" y="967" font-family="'Liberation Sans', sans-serif" font-size="28" fill="#000" font-weight="normal" text-anchor="start" >L</text>
<g transform="translate(612,941)"><path d="M0.5 16 L10 23 L20 30 L39.5 17 L39.5 14 L20 27 L0.5 14 Z" fill="#2020ff"/><path d="M3 19 L20 31 L37 19" fill="none" stroke="#8080ff" stroke-width="1.5"/><path d="M1 15 L14 2 L21 2 L23 6 L30 6 L39 15 L20 28 Z" fill="#ffffff"/><path d="M1 15 L14 2 L21 2 M23 7 L30 7 L39 15" fill="none" stroke="#000" stroke-width="2.2"/><path d="M21 4 L9 19 L17 23 L20 28" fill="none" stroke="#000" stroke-width="2"/><path d="M39 16 L25 26" fill="none" stroke="#000" stroke-width="2"/><path d="M3 16 L8 20 M26 24 L30 21 M5 12 L11 6 M31 9 L36 14" stroke="#808080" stroke-width="2"/><path d="M1 15 L1 18" stroke="#000" stroke-width="2"/></g>
<text x="289.6" y="1025" font-family="'Liberation Sans', sans-serif" font-size="28" fill="#000" font-weight="normal" text-anchor="start" textLength="202.7" lengthAdjust="spacingAndGlyphs" >* Und. Estoque :</text>
<rect x="498.4" y="988.6" width="102.60000000000002" height="50.39999999999998" fill="#d7d7d7" />
<rect x="500.4" y="990.6" width="98.60000000000002" height="46.39999999999998" fill="#a3a3a3" />
<rect x="502.4" y="992.6" width="94.60000000000002" height="42.39999999999998" fill="#fff" />
<text x="508" y="1025" font-family="'Liberation Sans', sans-serif" font-size="28" fill="#000" font-weight="normal" text-anchor="start" >L</text>
<g transform="translate(612,999)"><path d="M0.5 16 L10 23 L20 30 L39.5 17 L39.5 14 L20 27 L0.5 14 Z" fill="#2020ff"/><path d="M3 19 L20 31 L37 19" fill="none" stroke="#8080ff" stroke-width="1.5"/><path d="M1 15 L14 2 L21 2 L23 6 L30 6 L39 15 L20 28 Z" fill="#ffffff"/><path d="M1 15 L14 2 L21 2 M23 7 L30 7 L39 15" fill="none" stroke="#000" stroke-width="2.2"/><path d="M21 4 L9 19 L17 23 L20 28" fill="none" stroke="#000" stroke-width="2"/><path d="M39 16 L25 26" fill="none" stroke="#000" stroke-width="2"/><path d="M3 16 L8 20 M26 24 L30 21 M5 12 L11 6 M31 9 L36 14" stroke="#808080" stroke-width="2"/><path d="M1 15 L1 18" stroke="#000" stroke-width="2"/></g>
<text x="280" y="1082" font-family="'Liberation Sans', sans-serif" font-size="28" fill="#000" font-weight="normal" text-anchor="start" textLength="201.3" lengthAdjust="spacingAndGlyphs" >* Múltiplo Venda</text>
<rect x="498.4" y="1046.7" width="160.10000000000002" height="50.299999999999955" fill="#d7d7d7" />
<rect x="500.4" y="1048.7" width="156.10000000000002" height="46.299999999999955" fill="#a3a3a3" />
<rect x="502.4" y="1050.7" width="152.10000000000002" height="42.299999999999955" fill="#fff" />
<text x="648" y="1082" font-family="'Liberation Sans', sans-serif" font-size="28" fill="#000" font-weight="normal" text-anchor="end" >1</text>
<text x="252.5" y="1139.6" font-family="'Liberation Sans', sans-serif" font-size="28" fill="#000" font-weight="normal" text-anchor="start" textLength="230.5" lengthAdjust="spacingAndGlyphs" >* Peso Embalagem</text>
<rect x="498.4" y="1104" width="202.60000000000002" height="50" fill="#d7d7d7" />
<rect x="500.4" y="1106" width="198.60000000000002" height="46" fill="#a3a3a3" />
<rect x="502.4" y="1108" width="194.60000000000002" height="42" fill="#fff" />
<text x="606.6" y="1139.6" font-family="'Liberation Sans', sans-serif" font-size="28" fill="#000" font-weight="normal" text-anchor="start" textLength="83.0" lengthAdjust="spacingAndGlyphs" >0,0100</text>
<text x="707" y="1139.6" font-family="'Liberation Sans', sans-serif" font-size="29" fill="#000" font-weight="normal" text-anchor="start" textLength="48" lengthAdjust="spacingAndGlyphs" stroke="#000" stroke-width="1">KG</text>
<text x="755.4" y="966.2" font-family="'Liberation Sans', sans-serif" font-size="28" fill="#000" font-weight="normal" text-anchor="start" textLength="291.6" lengthAdjust="spacingAndGlyphs" >Fator Conversão Saída :</text>
<rect x="1052.3" y="931" width="203.70000000000005" height="50.799999999999955" fill="#d7d7d7" />
<rect x="1054.3" y="933" width="199.70000000000005" height="46.799999999999955" fill="#a3a3a3" />
<rect x="1056.3" y="935" width="195.70000000000005" height="42.799999999999955" fill="#fff" />
<text x="1147.7" y="966.2" font-family="'Liberation Sans', sans-serif" font-size="28" fill="#000" font-weight="normal" text-anchor="start" textLength="96.5" lengthAdjust="spacingAndGlyphs" >1,00000</text>
<text x="702" y="1024" font-family="'Liberation Sans', sans-serif" font-size="28" fill="#000" font-weight="normal" text-anchor="start" textLength="343" lengthAdjust="spacingAndGlyphs" >* Fator Conversão Entrada :</text>
<rect x="1052.3" y="988.7" width="203.70000000000005" height="50.299999999999955" fill="#d7d7d7" />
<rect x="1054.3" y="990.7" width="199.70000000000005" height="46.299999999999955" fill="#a3a3a3" />
<rect x="1056.3" y="992.7" width="195.70000000000005" height="42.299999999999955" fill="#fff" />
<text x="1147.7" y="1024" font-family="'Liberation Sans', sans-serif" font-size="28" fill="#000" font-weight="normal" text-anchor="start" textLength="96.5" lengthAdjust="spacingAndGlyphs" >1,00000</text>
<text x="847" y="1138.8" font-family="'Liberation Sans', sans-serif" font-size="28" fill="#000" font-weight="normal" text-anchor="start" textLength="201.5" lengthAdjust="spacingAndGlyphs" >* Peso Produto :</text>
<rect x="1052.3" y="1103.5" width="203.70000000000005" height="50.5" fill="#d7d7d7" />
<rect x="1054.3" y="1105.5" width="199.70000000000005" height="46.5" fill="#a3a3a3" />
<rect x="1056.3" y="1107.5" width="195.70000000000005" height="42.5" fill="#fff" />
<text x="1164" y="1138.8" font-family="'Liberation Sans', sans-serif" font-size="28" fill="#000" font-weight="normal" text-anchor="start" textLength="80.2" lengthAdjust="spacingAndGlyphs" >1,0000</text>
<text x="1261.5" y="1138.8" font-family="'Liberation Sans', sans-serif" font-size="29" fill="#000" font-weight="normal" text-anchor="start" textLength="47.9" lengthAdjust="spacingAndGlyphs" stroke="#000" stroke-width="1">KG</text>
<rect x="250" y="1165" width="1193" height="2" fill="#a0a0a0" />
<rect x="250" y="1167" width="232" height="42" fill="#c0c0c0" />
<text x="263.8" y="1195.5" font-family="'Liberation Sans', sans-serif" font-size="28" fill="#2a2af0" font-weight="normal" text-anchor="start" textLength="106.5" lengthAdjust="spacingAndGlyphs" >.Medidas</text>
<rect x="504" y="1186.4" width="29" height="29" fill="#a0a0a0" />
<text x="541" y="1213.2" font-family="'Liberation Sans', sans-serif" font-size="28" fill="#000" font-weight="normal" text-anchor="start" textLength="71.4" lengthAdjust="spacingAndGlyphs" >Metro</text>
<rect x="709.5" y="1186.4" width="29" height="29" fill="#a8a8a8" />
<rect x="711.5" y="1188.4" width="25" height="25" fill="#ffffff" />
<text x="746" y="1213.2" font-family="'Liberation Sans', sans-serif" font-size="28" fill="#000" font-weight="normal" text-anchor="start" textLength="147.7" lengthAdjust="spacingAndGlyphs" >Centímetros</text>
<rect x="916.8" y="1186.4" width="29" height="29" fill="#a8a8a8" />
<rect x="918.8" y="1188.4" width="25" height="25" fill="#ffffff" />
<text x="953" y="1213.2" font-family="'Liberation Sans', sans-serif" font-size="28" fill="#000" font-weight="normal" text-anchor="start" textLength="125.5" lengthAdjust="spacingAndGlyphs" >Polegadas</text>
<text x="360.2" y="1265.2" font-family="'Liberation Sans', sans-serif" font-size="28" fill="#000" font-weight="normal" text-anchor="start" textLength="133.3" lengthAdjust="spacingAndGlyphs" >Cubagem :</text>
<rect x="498.5" y="1229.4" width="202.20000000000005" height="49.59999999999991" fill="#d7d7d7" />
<rect x="500.5" y="1231.4" width="198.20000000000005" height="45.59999999999991" fill="#a3a3a3" />
<rect x="502.5" y="1233.4" width="194.20000000000005" height="41.59999999999991" fill="#fff" />
<text x="606.6" y="1265.2" font-family="'Liberation Sans', sans-serif" font-size="28" fill="#000" font-weight="normal" text-anchor="start" textLength="82.4" lengthAdjust="spacingAndGlyphs" >0,0000</text>
<text x="400.4" y="1322.5" font-family="'Liberation Sans', sans-serif" font-size="28" fill="#000" font-weight="normal" text-anchor="start" textLength="92.6" lengthAdjust="spacingAndGlyphs" >Altura :</text>
<rect x="498.5" y="1287" width="202.20000000000005" height="49.799999999999955" fill="#d7d7d7" />
<rect x="500.5" y="1289" width="198.20000000000005" height="45.799999999999955" fill="#a3a3a3" />
<rect x="502.5" y="1291" width="194.20000000000005" height="41.799999999999955" fill="#fff" />
<text x="606.6" y="1322.5" font-family="'Liberation Sans', sans-serif" font-size="28" fill="#000" font-weight="normal" text-anchor="start" textLength="82.4" lengthAdjust="spacingAndGlyphs" >0,0000</text>
<text x="933.5" y="1265.2" font-family="'Liberation Sans', sans-serif" font-size="28" fill="#000" font-weight="normal" text-anchor="start" textLength="111.8" lengthAdjust="spacingAndGlyphs" >Largura :</text>
<rect x="1050.3" y="1229.4" width="203.29999999999995" height="49.59999999999991" fill="#d7d7d7" />
<rect x="1052.3" y="1231.4" width="199.29999999999995" height="45.59999999999991" fill="#a3a3a3" />
<rect x="1054.3" y="1233.4" width="195.29999999999995" height="41.59999999999991" fill="#fff" />
<text x="1158.6" y="1265.2" font-family="'Liberation Sans', sans-serif" font-size="28" fill="#000" font-weight="normal" text-anchor="start" textLength="82.2" lengthAdjust="spacingAndGlyphs" >0,0000</text>
<text x="867.6" y="1322.5" font-family="'Liberation Sans', sans-serif" font-size="28" fill="#000" font-weight="normal" text-anchor="start" textLength="177.7" lengthAdjust="spacingAndGlyphs" >Comprimento :</text>
<rect x="1050.3" y="1287" width="203.29999999999995" height="49.799999999999955" fill="#d7d7d7" />
<rect x="1052.3" y="1289" width="199.29999999999995" height="45.799999999999955" fill="#a3a3a3" />
<rect x="1054.3" y="1291" width="195.29999999999995" height="41.799999999999955" fill="#fff" />
<text x="1158.6" y="1322.5" font-family="'Liberation Sans', sans-serif" font-size="28" fill="#000" font-weight="normal" text-anchor="start" textLength="82.2" lengthAdjust="spacingAndGlyphs" >0,0000</text>
<rect x="250" y="1346" width="1193" height="2" fill="#a0a0a0" />
<rect x="250" y="1348" width="1193" height="44" fill="#c0c0c0" />
<text x="263.8" y="1377.7" font-family="'Liberation Sans', sans-serif" font-size="28" fill="#2a2af0" font-weight="normal" text-anchor="start" textLength="426.8" lengthAdjust="spacingAndGlyphs" >.Agrupamento (Família de produtos)</text>
<text x="312" y="1438.2" font-family="'Liberation Sans', sans-serif" font-size="28" fill="#000" font-weight="normal" text-anchor="start" textLength="114.5" lengthAdjust="spacingAndGlyphs" >* Grupo :</text>
<rect x="430.5" y="1401.4" width="90.5" height="49.59999999999991" fill="#d7d7d7" />
<rect x="432.5" y="1403.4" width="86.5" height="45.59999999999991" fill="#a3a3a3" />
<rect x="434.5" y="1405.4" width="82.5" height="41.59999999999991" fill="#fff" />
<text x="438" y="1438.2" font-family="'Liberation Sans', sans-serif" font-size="28" fill="#000" font-weight="normal" text-anchor="start" textLength="53" lengthAdjust="spacingAndGlyphs" >001</text>
<rect x="525" y="1401.4" width="660.5" height="49.59999999999991" fill="#d7d7d7" />
<rect x="527" y="1403.4" width="656.5" height="45.59999999999991" fill="#a3a3a3" />
<rect x="529" y="1405.4" width="652.5" height="41.59999999999991" fill="#400080" />
<text x="533.3" y="1438.2" font-family="'Liberation Sans', sans-serif" font-size="28" fill="#ffffff" font-weight="normal" text-anchor="start" textLength="109.1" lengthAdjust="spacingAndGlyphs" >ESTERES</text>
<g transform="translate(1199,1410)"><path d="M0.5 16 L10 23 L20 30 L39.5 17 L39.5 14 L20 27 L0.5 14 Z" fill="#2020ff"/><path d="M3 19 L20 31 L37 19" fill="none" stroke="#8080ff" stroke-width="1.5"/><path d="M1 15 L14 2 L21 2 L23 6 L30 6 L39 15 L20 28 Z" fill="#ffffff"/><path d="M1 15 L14 2 L21 2 M23 7 L30 7 L39 15" fill="none" stroke="#000" stroke-width="2.2"/><path d="M21 4 L9 19 L17 23 L20 28" fill="none" stroke="#000" stroke-width="2"/><path d="M39 16 L25 26" fill="none" stroke="#000" stroke-width="2"/><path d="M3 16 L8 20 M26 24 L30 21 M5 12 L11 6 M31 9 L36 14" stroke="#808080" stroke-width="2"/><path d="M1 15 L1 18" stroke="#000" stroke-width="2"/></g>
<text x="256.9" y="1495.5" font-family="'Liberation Sans', sans-serif" font-size="28" fill="#000" font-weight="normal" text-anchor="start" textLength="169.6" lengthAdjust="spacingAndGlyphs" >* Sub-Grupo :</text>
<rect x="430.5" y="1458.7" width="90.5" height="49.299999999999955" fill="#d7d7d7" />
<rect x="432.5" y="1460.7" width="86.5" height="45.299999999999955" fill="#a3a3a3" />
<rect x="434.5" y="1462.7" width="82.5" height="41.299999999999955" fill="#fff" />
<text x="438" y="1495.5" font-family="'Liberation Sans', sans-serif" font-size="28" fill="#000" font-weight="normal" text-anchor="start" textLength="53" lengthAdjust="spacingAndGlyphs" >001</text>
<rect x="525" y="1458.7" width="660.5" height="49.299999999999955" fill="#d7d7d7" />
<rect x="527" y="1460.7" width="656.5" height="45.299999999999955" fill="#a3a3a3" />
<rect x="529" y="1462.7" width="652.5" height="41.299999999999955" fill="#400080" />
<text x="533.3" y="1495.5" font-family="'Liberation Sans', sans-serif" font-size="28" fill="#ffffff" font-weight="normal" text-anchor="start" textLength="213.1" lengthAdjust="spacingAndGlyphs" >SOLVENTE POLAR</text>
<g transform="translate(1199,1467)"><path d="M0.5 16 L10 23 L20 30 L39.5 17 L39.5 14 L20 27 L0.5 14 Z" fill="#2020ff"/><path d="M3 19 L20 31 L37 19" fill="none" stroke="#8080ff" stroke-width="1.5"/><path d="M1 15 L14 2 L21 2 L23 6 L30 6 L39 15 L20 28 Z" fill="#ffffff"/><path d="M1 15 L14 2 L21 2 M23 7 L30 7 L39 15" fill="none" stroke="#000" stroke-width="2.2"/><path d="M21 4 L9 19 L17 23 L20 28" fill="none" stroke="#000" stroke-width="2"/><path d="M39 16 L25 26" fill="none" stroke="#000" stroke-width="2"/><path d="M3 16 L8 20 M26 24 L30 21 M5 12 L11 6 M31 9 L36 14" stroke="#808080" stroke-width="2"/><path d="M1 15 L1 18" stroke="#000" stroke-width="2"/></g>
<rect x="1446" y="488" width="4" height="1357" fill="#a0a0a0" />
<rect x="1450" y="488" width="1252" height="50" fill="#c0c0c0" />
<text x="1463" y="521.8" font-family="'Liberation Sans', sans-serif" font-size="28" fill="#2a2af0" font-weight="normal" text-anchor="start" textLength="76" lengthAdjust="spacingAndGlyphs" >.Grade</text>
<rect x="1450" y="684" width="1252" height="2" fill="#a0a0a0" />
<rect x="1450" y="686" width="1252" height="39" fill="#c0c0c0" />
<text x="1463" y="714.3" font-family="'Liberation Sans', sans-serif" font-size="28" fill="#2a2af0" font-weight="normal" text-anchor="start" textLength="86" lengthAdjust="spacingAndGlyphs" >.Status</text>
<rect x="1494" y="742.5" width="29" height="29" fill="#a0a0a0" />
<text x="1532" y="769.5" font-family="'Liberation Sans', sans-serif" font-size="28" fill="#333333" font-weight="normal" text-anchor="start" textLength="98.5" lengthAdjust="spacingAndGlyphs" >Em linha</text>
<rect x="1494" y="783" width="29" height="29" fill="#a8a8a8" />
<rect x="1496" y="785" width="25" height="25" fill="#ffffff" />
<text x="1532" y="809.5" font-family="'Liberation Sans', sans-serif" font-size="28" fill="#333333" font-weight="normal" text-anchor="start" textLength="163" lengthAdjust="spacingAndGlyphs" >Fora de Linha</text>
<rect x="1916" y="729" width="2" height="138" fill="#a0a0a0" />
<text x="2557" y="767.3" font-family="'Liberation Sans', sans-serif" font-size="28" fill="#2a2af0" font-weight="normal" text-anchor="start" textLength="62.5" lengthAdjust="spacingAndGlyphs" >KIT :</text>
<rect x="2632" y="740" width="29" height="29" fill="#a8a8a8" />
<rect x="2634" y="742" width="25" height="25" fill="#ffffff" />
<rect x="1450" y="874" width="1252" height="2" fill="#a0a0a0" />
<rect x="1450" y="876" width="1252" height="39" fill="#c0c0c0" />
<text x="1462.7" y="905.6" font-family="'Liberation Sans', sans-serif" font-size="28" fill="#2a2af0" font-weight="normal" text-anchor="start" textLength="56.9" lengthAdjust="spacingAndGlyphs" >.Tipo</text>
<text x="1932" y="905.6" font-family="'Liberation Sans', sans-serif" font-size="28" fill="#2a2af0" font-weight="normal" text-anchor="start" textLength="110" lengthAdjust="spacingAndGlyphs" >.Usuários</text>
<rect x="1916" y="923" width="2" height="418" fill="#a0a0a0" />
<rect x="1495" y="923" width="29" height="29" fill="#a8a8a8" />
<rect x="1497" y="925" width="25" height="25" fill="#ffffff" />
<text x="1532.4" y="948.6" font-family="'Liberation Sans', sans-serif" font-size="28" fill="#000" font-weight="normal" text-anchor="start" textLength="205.1" lengthAdjust="spacingAndGlyphs" >Produto acabado</text>
<rect x="1495" y="963" width="29" height="29" fill="#a0a0a0" />
<text x="1532.4" y="988.7" font-family="'Liberation Sans', sans-serif" font-size="28" fill="#000" font-weight="normal" text-anchor="start" textLength="163.2" lengthAdjust="spacingAndGlyphs" >Matéria prima</text>
<rect x="1495" y="1000.5" width="29" height="29" fill="#a8a8a8" />
<rect x="1497" y="1002.5" width="25" height="25" fill="#ffffff" />
<text x="1532.4" y="1027" font-family="'Liberation Sans', sans-serif" font-size="28" fill="#000" font-weight="normal" text-anchor="start" textLength="276.6" lengthAdjust="spacingAndGlyphs" >Material de embalagem</text>
<rect x="1495" y="1040.5" width="29" height="29" fill="#a8a8a8" />
<rect x="1497" y="1042.5" width="25" height="25" fill="#ffffff" />
<text x="1532.4" y="1065.7" font-family="'Liberation Sans', sans-serif" font-size="28" fill="#000" font-weight="normal" text-anchor="start" textLength="258.6" lengthAdjust="spacingAndGlyphs" >Material intermediário</text>
<rect x="1495" y="1079" width="29" height="29" fill="#a8a8a8" />
<rect x="1497" y="1081" width="25" height="25" fill="#ffffff" />
<text x="1532.4" y="1104" font-family="'Liberation Sans', sans-serif" font-size="28" fill="#000" font-weight="normal" text-anchor="start" textLength="297.6" lengthAdjust="spacingAndGlyphs" >Material de uso/consumo</text>
<rect x="1495" y="1118.5" width="29" height="29" fill="#a8a8a8" />
<rect x="1497" y="1120.5" width="25" height="25" fill="#ffffff" />
<text x="1532.4" y="1144.3" font-family="'Liberation Sans', sans-serif" font-size="28" fill="#000" font-weight="normal" text-anchor="start" textLength="197.6" lengthAdjust="spacingAndGlyphs" >Ativo imobilizado</text>
<rect x="1495" y="1156" width="29" height="29" fill="#a8a8a8" />
<rect x="1497" y="1158" width="25" height="25" fill="#ffffff" />
<text x="1532.4" y="1181.3" font-family="'Liberation Sans', sans-serif" font-size="28" fill="#000" font-weight="normal" text-anchor="start" textLength="266.1" lengthAdjust="spacingAndGlyphs" >Produto para revenda</text>
<rect x="1495" y="1196" width="29" height="29" fill="#a8a8a8" />
<rect x="1497" y="1198" width="25" height="25" fill="#ffffff" />
<text x="1532.4" y="1221.4" font-family="'Liberation Sans', sans-serif" font-size="28" fill="#000" font-weight="normal" text-anchor="start" textLength="101.6" lengthAdjust="spacingAndGlyphs" >Serviços</text>
<rect x="1495" y="1234" width="29" height="29" fill="#a8a8a8" />
<rect x="1497" y="1236" width="25" height="25" fill="#ffffff" />
<text x="1532.4" y="1258.5" font-family="'Liberation Sans', sans-serif" font-size="28" fill="#000" font-weight="normal" text-anchor="start" textLength="96.1" lengthAdjust="spacingAndGlyphs" >Veiculos</text>
<rect x="1495" y="1273" width="29" height="29" fill="#a8a8a8" />
<rect x="1497" y="1275" width="25" height="25" fill="#ffffff" />
<text x="1532.4" y="1298.6" font-family="'Liberation Sans', sans-serif" font-size="28" fill="#000" font-weight="normal" text-anchor="start" textLength="71.1" lengthAdjust="spacingAndGlyphs" >Peças</text>
<rect x="1495" y="1311" width="29" height="29" fill="#a8a8a8" />
<rect x="1497" y="1313" width="25" height="25" fill="#ffffff" />
<text x="1532.4" y="1337" font-family="'Liberation Sans', sans-serif" font-size="28" fill="#000" font-weight="normal" text-anchor="start" textLength="205.1" lengthAdjust="spacingAndGlyphs" >Desenvolvimento</text>
<text x="2276" y="977" font-family="'Liberation Sans', sans-serif" font-size="28" fill="#000" font-weight="normal" text-anchor="start" textLength="185.7" lengthAdjust="spacingAndGlyphs" >Data Inclusão :</text>
<rect x="2464.6" y="940.8" width="203.4000000000001" height="50.700000000000045" fill="#d7d7d7" />
<rect x="2466.6" y="942.8" width="199.4000000000001" height="46.700000000000045" fill="#a3a3a3" />
<rect x="2468.6" y="944.8" width="195.4000000000001" height="42.700000000000045" fill="#008080" />
<text x="2474.5" y="977" font-family="'Liberation Sans', sans-serif" font-size="28" fill="#ffffff" font-weight="normal" text-anchor="start" textLength="139.9" lengthAdjust="spacingAndGlyphs" >16/02/2024</text>
<text x="1973" y="1035.5" font-family="'Liberation Sans', sans-serif" font-size="28" fill="#000" font-weight="normal" text-anchor="start" textLength="111" lengthAdjust="spacingAndGlyphs" >Usuário :</text>
<rect x="2087.6" y="998.5" width="580.4000000000001" height="50.5" fill="#d7d7d7" />
<rect x="2089.6" y="1000.5" width="576.4000000000001" height="46.5" fill="#a3a3a3" />
<rect x="2091.6" y="1002.5" width="572.4000000000001" height="42.5" fill="#008080" />
<text x="2095.6" y="1035.5" font-family="'Liberation Sans', sans-serif" font-size="28" fill="#ffffff" font-weight="normal" text-anchor="start" textLength="49.9" lengthAdjust="spacingAndGlyphs" >SHP</text>
<text x="2181.3" y="1132.8" font-family="'Liberation Sans', sans-serif" font-size="28" fill="#000" font-weight="normal" text-anchor="start" textLength="282.4" lengthAdjust="spacingAndGlyphs" >Data Última Alteração :</text>
<rect x="2464.6" y="1096.6" width="203.4000000000001" height="50.700000000000045" fill="#d7d7d7" />
<rect x="2466.6" y="1098.6" width="199.4000000000001" height="46.700000000000045" fill="#a3a3a3" />
<rect x="2468.6" y="1100.6" width="195.4000000000001" height="42.700000000000045" fill="#008080" />
<text x="2474.5" y="1132.8" font-family="'Liberation Sans', sans-serif" font-size="28" fill="#ffffff" font-weight="normal" text-anchor="start" textLength="139.9" lengthAdjust="spacingAndGlyphs" >12/08/2024</text>
<text x="1973" y="1190" font-family="'Liberation Sans', sans-serif" font-size="28" fill="#000" font-weight="normal" text-anchor="start" textLength="111" lengthAdjust="spacingAndGlyphs" >Usuário :</text>
<rect x="2087.6" y="1154" width="580.4000000000001" height="50" fill="#d7d7d7" />
<rect x="2089.6" y="1156" width="576.4000000000001" height="46" fill="#a3a3a3" />
<rect x="2091.6" y="1158" width="572.4000000000001" height="42" fill="#008080" />
<text x="2095.6" y="1190" font-family="'Liberation Sans', sans-serif" font-size="28" fill="#ffffff" font-weight="normal" text-anchor="start" textLength="49.9" lengthAdjust="spacingAndGlyphs" >SHP</text>
<rect x="1450" y="1344" width="1252" height="2" fill="#a0a0a0" />
<rect x="1450" y="1346" width="1252" height="41" fill="#c0c0c0" />
<text x="1462" y="1376.8" font-family="'Liberation Sans', sans-serif" font-size="28" fill="#2a2af0" font-weight="normal" text-anchor="start" textLength="151.7" lengthAdjust="spacingAndGlyphs" >.Procedência</text>
<rect x="1492.4" y="1400.3" width="859.0" height="50.700000000000045" fill="#d7d7d7" />
<rect x="1494.4" y="1402.3" width="855.0" height="46.700000000000045" fill="#a3a3a3" />
<rect x="1496.4" y="1404.3" width="851.0" height="42.700000000000045" fill="#fff" />
<text x="1501.7" y="1437.5" font-family="'Liberation Sans', sans-serif" font-size="28" fill="#000" font-weight="normal" text-anchor="start" textLength="679.3" lengthAdjust="spacingAndGlyphs" >0 - Nacional, exceto as indicadas nos códigos 3, 4, 5 e 8;</text>
<rect x="2304" y="1410" width="38" height="32" fill="#a8a8a8" />
<rect x="2304" y="1410" width="35" height="30" fill="#f0f0f0" />
<rect x="2304" y="1410" width="35" height="2" fill="#e4e4e4" />
<path d="M2314 1422 L2332 1422 L2332 1425 L2323 1434 L2314 1425 Z" fill="#000"/>
<text x="1881.4" y="1497.3" font-family="'Liberation Sans', sans-serif" font-size="28" fill="#000" font-weight="normal" text-anchor="start" textLength="335.2" lengthAdjust="spacingAndGlyphs" >Cód. Serviço na Prefeitura :</text>
<rect x="2222.8" y="1461" width="127.19999999999982" height="50" fill="#d7d7d7" />
<rect x="2224.8" y="1463" width="123.19999999999982" height="46" fill="#a3a3a3" />
<rect x="2226.8" y="1465" width="119.19999999999982" height="42" fill="#fff" />
<rect x="1450" y="1522" width="1252" height="2" fill="#a0a0a0" />
<rect x="1450" y="1524" width="1252" height="44" fill="#c0c0c0" />
<text x="1464" y="1557" font-family="'Liberation Sans', sans-serif" font-size="28" fill="#2a2af0" font-weight="normal" text-anchor="start" textLength="123.3" lengthAdjust="spacingAndGlyphs" >.Tipo peso</text>
<rect x="1494.4" y="1575.4" width="29" height="29" fill="#a0a0a0" />
<text x="1531" y="1599.7" font-family="'Liberation Sans', sans-serif" font-size="28" fill="#000" font-weight="normal" text-anchor="start" textLength="87" lengthAdjust="spacingAndGlyphs" >Padrão</text>
<rect x="1724.3" y="1575.4" width="29" height="29" fill="#a8a8a8" />
<rect x="1726.3" y="1577.4" width="25" height="25" fill="#ffffff" />
<text x="1761.8" y="1599.7" font-family="'Liberation Sans', sans-serif" font-size="28" fill="#000" font-weight="normal" text-anchor="start" textLength="96.6" lengthAdjust="spacingAndGlyphs" >Variável</text>
<rect x="2362" y="1901" width="144" height="44" rx="4" fill="url(#btng)" stroke="#1e4a86" stroke-width="2.5"/>
<text x="2376.7" y="1932" font-family="'Liberation Sans', sans-serif" font-size="28" fill="#000" font-weight="normal" text-anchor="start" textLength="108.1" lengthAdjust="spacingAndGlyphs" >Confirma</text>
<rect x="2378" y="1936" width="18" height="2" fill="#000" />
<rect x="2526" y="1901" width="145" height="44" rx="4" fill="url(#btng)" stroke="#1e4a86" stroke-width="2.5"/>
<text x="2549" y="1932" font-family="'Liberation Sans', sans-serif" font-size="28" fill="#000" font-weight="normal" text-anchor="start" textLength="96.2" lengthAdjust="spacingAndGlyphs" >Cancela</text>
<rect x="2568" y="1936" width="16" height="2" fill="#000" />
<g filter="url(#sh)"><polygon points="1000,240 1516,240 1516,468 1115,468 869,499 1000,366" fill="rgba(53,119,177,0.79)"/></g>
<g filter="url(#sh)"><polygon points="1474,480 1990,480 1990,651 1474,651 1133,718 1474,575" fill="rgba(53,119,177,0.79)"/></g>
<g filter="url(#sh)"><polygon points="1474,676 1990,676 1990,822 1474,822 1172,845.5 1474,757" fill="rgba(53,119,177,0.79)"/></g>
<polygon points="1418,926 2154,926 2154,1132 1418,1132 1262,1027" fill="rgba(53,119,177,0.79)"/>
<g filter="url(#sh)"><polygon points="470,1550 986,1550 986,1778 470,1778 470,1651.5 338.5,1518 584,1550" fill="rgba(53,119,177,0.79)"/></g>
<g filter="url(#tsh)">
<text x="1116" y="286" font-family="'Liberation Sans', sans-serif" font-size="35" fill="#ffffff" font-weight="normal" text-anchor="start" textLength="292.3" lengthAdjust="spacingAndGlyphs" >O código pode ser</text>
<text x="1082.4" y="327.8" font-family="'Liberation Sans', sans-serif" font-size="35" fill="#ffffff" font-weight="normal" text-anchor="start" textLength="359.0" lengthAdjust="spacingAndGlyphs" >sequencial ou inserido</text>
<text x="1044" y="369.5" font-family="'Liberation Sans', sans-serif" font-size="35" fill="#ffffff" font-weight="normal" text-anchor="start" textLength="435.3" lengthAdjust="spacingAndGlyphs" >manualmente, dependendo</text>
<text x="1114.6" y="411" font-family="'Liberation Sans', sans-serif" font-size="35" fill="#ffffff" font-weight="normal" text-anchor="start" textLength="294.6" lengthAdjust="spacingAndGlyphs" >das configurações</text>
<text x="1532.4" y="533.2" font-family="'Liberation Sans', sans-serif" font-size="35" fill="#ffffff" font-weight="normal" text-anchor="start" textLength="414.6" lengthAdjust="spacingAndGlyphs" >Selecione aqui, se desejar</text>
<text x="1556.8" y="575" font-family="'Liberation Sans', sans-serif" font-size="35" fill="#ffffff" font-weight="normal" text-anchor="start" textLength="357.0" lengthAdjust="spacingAndGlyphs" >a marca do produto, já</text>
<text x="1532.4" y="617.2" font-family="'Liberation Sans', sans-serif" font-size="35" fill="#ffffff" font-weight="normal" text-anchor="start" textLength="414.6" lengthAdjust="spacingAndGlyphs" >cadastrada anteriormente</text>
<text x="1492" y="718.6" font-family="'Liberation Sans', sans-serif" font-size="35" fill="#ffffff" font-weight="normal" text-anchor="start" textLength="460.6" lengthAdjust="spacingAndGlyphs" >Garantia em meses, validade</text>
<text x="1653" y="760.3" font-family="'Liberation Sans', sans-serif" font-size="35" fill="#ffffff" font-weight="normal" text-anchor="start" textLength="137" lengthAdjust="spacingAndGlyphs" >em anos</text>
<text x="1562" y="1016.8" font-family="'Liberation Sans', sans-serif" font-size="35" fill="#ffffff" font-weight="normal" text-anchor="start" textLength="408.3" lengthAdjust="spacingAndGlyphs" >Nesse campo dados para</text>
<text x="1613.3" y="1058.3" font-family="'Liberation Sans', sans-serif" font-size="35" fill="#ffffff" font-weight="normal" text-anchor="start" textLength="305.1" lengthAdjust="spacingAndGlyphs" >conversão do item.</text>
<text x="547.3" y="1607" font-family="'Liberation Sans', sans-serif" font-size="35" fill="#ffffff" font-weight="normal" text-anchor="start" textLength="369.5" lengthAdjust="spacingAndGlyphs" >Aqui, deverá selecionar</text>
<text x="553.2" y="1649" font-family="'Liberation Sans', sans-serif" font-size="35" fill="#ffffff" font-weight="normal" text-anchor="start" textLength="357.1" lengthAdjust="spacingAndGlyphs" >o Grupo e Sales Group</text>
<text x="505.5" y="1691.7" font-family="'Liberation Sans', sans-serif" font-size="35" fill="#ffffff" font-weight="normal" text-anchor="start" textLength="452.1" lengthAdjust="spacingAndGlyphs" >já cadastrados ateriormente</text>
</g>
</svg></body></html>
